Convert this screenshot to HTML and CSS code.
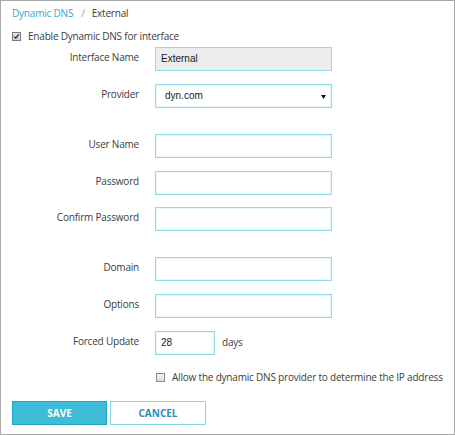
FILE: index.html
```html
<!DOCTYPE html>
<html>
<head>
<meta charset="utf-8">
<link rel="stylesheet" href="styles.css">
</head>
<body>
<div class="panel">
  <div class="crumbs"><a class="crumb-link">Dynamic DNS</a><span class="sep">/</span><span class="crumb-current">External</span></div>
  <label class="check-row enable">
    <span class="box checked"><svg width="9" height="9" viewBox="0 0 9 9"><path d="M1.6 4.6 L3.5 6.6 L7.4 1.8" fill="none" stroke="#1e1e1e" stroke-width="1.6"/></svg></span>
    <span>Enable Dynamic DNS for interface</span>
  </label>

  <div class="row">
    <span class="label">Interface Name</span>
    <div class="field readonly">External</div>
  </div>
  <div class="row group-end">
    <span class="label">Provider</span>
    <div class="field select"><span>dyn.com</span><svg width="5" height="4" viewBox="0 0 5 4"><path d="M0 0 H5 L2.5 4 Z" fill="#111"/></svg></div>
  </div>

  <div class="row">
    <span class="label">User Name</span>
    <div class="field"></div>
  </div>
  <div class="row tight">
    <span class="label">Password</span>
    <div class="field"></div>
  </div>
  <div class="row group-end">
    <span class="label">Confirm Password</span>
    <div class="field"></div>
  </div>

  <div class="row">
    <span class="label">Domain</span>
    <div class="field"></div>
  </div>
  <div class="row">
    <span class="label">Options</span>
    <div class="field"></div>
  </div>
  <div class="row last">
    <span class="label">Forced Update</span>
    <div class="field short">28</div>
    <span class="unit">days</span>
  </div>

  <div class="row allow">
    <span class="label"></span>
    <label class="check-row">
      <span class="box"></span>
      <span>Allow the dynamic DNS provider to determine the IP address</span>
    </label>
  </div>

  <div class="buttons">
    <button class="btn primary">SAVE</button>
    <button class="btn secondary">CANCEL</button>
  </div>
</div>
</body>
</html>
```
FILE: styles.css
```css
html, body {
  margin: 0;
  padding: 0;
  background: #ffffff;
}

.panel {
  width: 455px;
  height: 435px;
  box-sizing: border-box;
  border: 1px solid #a8a8a8;
  padding: 5px 11px 0 11px;
  font-family: "Open Sans", "Noto Sans", sans-serif;
  font-size: 10px;
  letter-spacing: -0.2px;
  color: #3c3c3c;
}

.crumbs {
  line-height: 14px;
  display: flex;
  align-items: baseline;
}

.crumb-link {
  color: #2ea8d3;
}

.sep {
  color: #9a9a9a;
  margin: 0 7px 0 8px;
}

.crumb-current {
  color: #3c3c3c;
}

.check-row {
  display: flex;
  align-items: center;
  gap: 7px;
  line-height: 14px;
}

.enable {
  margin-top: 9px;
  margin-bottom: 4px;
}

.box {
  width: 9px;
  height: 9px;
  box-sizing: border-box;
  border: 1px solid #8c8c8c;
  background: linear-gradient(#f2f2f2, #dedede);
  display: flex;
  align-items: center;
  justify-content: center;
  flex: none;
}

.box svg {
  display: block;
}

.box.checked {
  background: linear-gradient(#e4e4e4, #cfcfcf);
  border-color: #7a7a7a;
}

.row {
  display: flex;
  align-items: flex-start;
  gap: 16px;
  height: 24px;
  margin-bottom: 13px;
}

.row.tight {
  margin-bottom: 12px;
}

.row.group-end {
  margin-bottom: 26px;
}

.row.last {
  margin-bottom: 15px;
}

.label {
  width: 127px;
  flex: none;
  text-align: right;
  line-height: 14px;
  padding-top: 3px;
}

.field {
  width: 177px;
  height: 24px;
  box-sizing: border-box;
  border: 1px solid #8edbea;
  box-shadow: inset 0 0 0 1px #e4f6fa;
  background: #ffffff;
  font-family: "Liberation Sans", Arial, sans-serif;
  font-size: 10px;
  letter-spacing: 0;
  color: #1a1a1a;
  line-height: 22px;
  padding: 0 5px;
}

.field.readonly {
  background: #ededed;
  box-shadow: none;
}

.field.select {
  display: flex;
  align-items: center;
  justify-content: space-between;
  padding: 0 5px 0 9px;
}

.field.select svg {
  display: block;
  margin-top: 1px;
}

.field.short {
  width: 60px;
}

.unit {
  line-height: 14px;
  padding-top: 4px;
  margin-left: -9px;
}

.row.allow {
  height: 14px;
  margin-bottom: 17px;
  align-items: center;
}

.row.allow .label {
  padding-top: 0;
}

.row.allow .check-row {
  margin-left: 1px;
}

.buttons {
  display: flex;
  gap: 3px;
}

.btn {
  width: 95px;
  height: 24px;
  box-sizing: border-box;
  font-family: "Open Sans", "Noto Sans", sans-serif;
  font-size: 10px;
  font-weight: 700;
  letter-spacing: 0;
  padding: 0;
  cursor: pointer;
}

.btn.primary {
  background: #3cbcd6;
  border: 1px solid #1ea6c2;
  color: #ffffff;
}

.btn.secondary {
  width: 96px;
  background: #ffffff;
  border: 1px solid #86d6e6;
  color: #2b8fae;
}
```
